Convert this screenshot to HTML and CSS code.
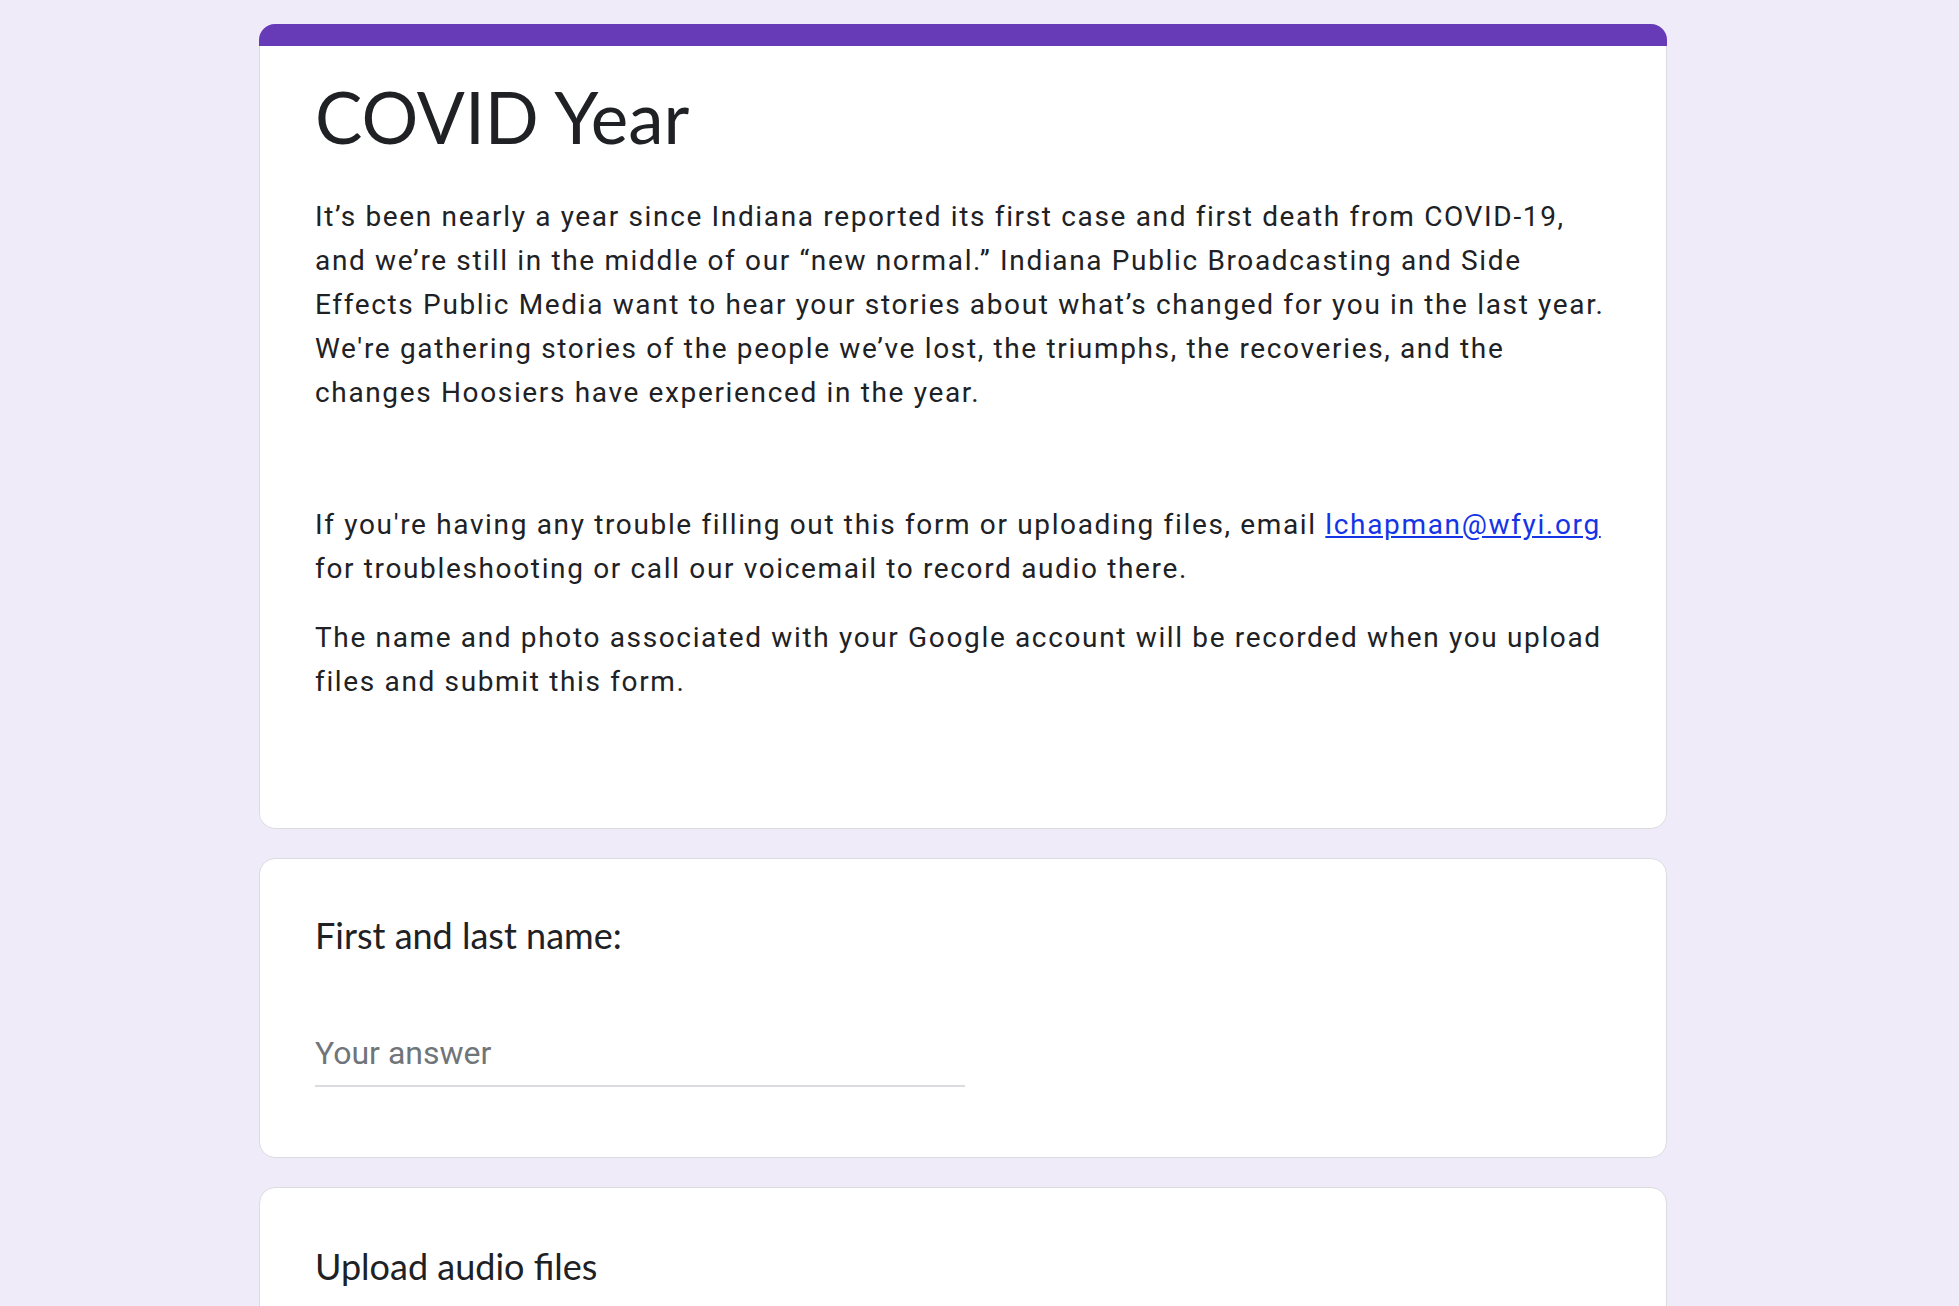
FILE: index.html
```html
<!DOCTYPE html>
<html lang="en">
<head>
<meta charset="utf-8">
<title>COVID Year</title>
<link rel="stylesheet" href="styles.css">
</head>
<body>
<main class="page">
  <section class="card header-card">
    <div class="accent"></div>
    <div class="header-body">
      <h1 class="form-title">COVID Year</h1>
      <div class="description">
        <p>It’s been nearly a year since Indiana reported its first case and first death from COVID-19, and we’re still in the middle of our “new normal.” Indiana Public Broadcasting and Side Effects Public Media want to hear your stories about what’s changed for you in the last year. We're gathering stories of the people we’ve lost, the triumphs, the recoveries, and the changes Hoosiers have experienced in the year.<br><br><br>If you're having any trouble filling out this form or uploading files, email <a href="#">lchapman@wfyi.org</a> for troubleshooting or call our voicemail to record audio there.</p>
        <p>The name and photo associated with your Google account will be recorded when you upload files and submit this form.</p>
      </div>
    </div>
  </section>

  <section class="card question">
    <label class="q-title" for="name">First and last name:</label>
    <input class="answer" id="name" type="text" placeholder="Your answer">
  </section>

  <section class="card question tall">
    <div class="q-title">Upload audio files</div>
  </section>
</main>
</body>
</html>
```

FILE: styles.css
```css
html, body {
  margin: 0;
  padding: 0;
  background: #f0ebf8;
}

body {
  font-family: Roboto, "Noto Sans", Arial, sans-serif;
  color: #202124;
  height: 1306px;
  overflow: hidden;
}

.page {
  width: 1408px;
  padding: 24px 0 0 259px;
  display: flex;
  flex-direction: column;
  gap: 29px;
}

.card {
  background: #fff;
  border: 1px solid #dadce0;
  border-radius: 16px;
  box-sizing: border-box;
}

.header-card {
  border: none;
  overflow: hidden;
  background: transparent;
}

.accent {
  height: 22px;
  background: #673ab7;
}

.header-body {
  background: #fff;
  border: 1px solid #dadce0;
  border-top: none;
  border-radius: 0 0 16px 16px;
  padding: 28px 50px 124px 55px;
}

.form-title {
  margin: 0;
  font-family: Lato, "Open Sans", sans-serif;
  font-weight: 400;
  font-size: 71px;
  line-height: 86px;
  color: #202124;
}

.description {
  margin-top: 35px;
  font-size: 28px;
  letter-spacing: 1.65px;
  line-height: 44px;
  color: #202124;
}

.description p {
  margin: 0 0 25px 0;
}

.description p:last-child {
  margin-bottom: 0;
}

.description a {
  color: #1434e6;
  text-decoration: underline;
}

.question {
  padding: 55px 55px 70px 55px;
  display: flex;
  flex-direction: column;
  align-items: flex-start;
}

.q-title {
  font-family: Lato, "Open Sans", sans-serif;
  font-size: 36px;
  line-height: 42px;
  color: #202124;
}

.answer {
  margin-top: 77px;
  width: 650px;
  height: 40px;
  padding: 0 0 12px 0;
  border: none;
  border-bottom: 2px solid #dadce0;
  outline: none;
  font-family: Roboto, sans-serif;
  font-size: 32px;
  color: #202124;
  background: transparent;
}

.answer::placeholder {
  color: #70757a;
}

.tall {
  padding-top: 57px;
  min-height: 300px;
}
```
